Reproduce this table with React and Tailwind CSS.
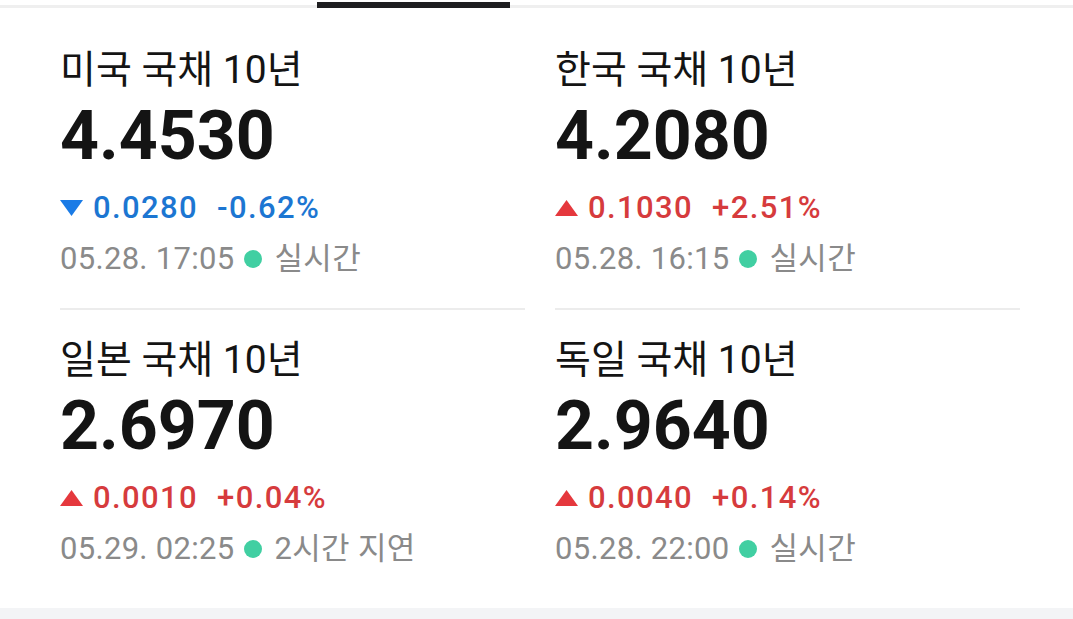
import React from "react";

const bonds = [
  { name: "미국 국채 10년", value: "4.4530", dir: "down", diff: "0.0280", rate: "-0.62%", time: "05.28. 17:05", status: "실시간" },
  { name: "한국 국채 10년", value: "4.2080", dir: "up", diff: "0.1030", rate: "+2.51%", time: "05.28. 16:15", status: "실시간" },
  { name: "일본 국채 10년", value: "2.6970", dir: "up", diff: "0.0010", rate: "+0.04%", time: "05.29. 02:25", status: "2시간 지연" },
  { name: "독일 국채 10년", value: "2.9640", dir: "up", diff: "0.0040", rate: "+0.14%", time: "05.28. 22:00", status: "실시간" },
];

const Arrow = ({ dir }) =>
  dir === "up" ? (
    <svg width="23" height="16" viewBox="0 0 23 16" className="mr-[10px] shrink-0">
      <polygon points="11.5,0 23,16 0,16" fill="#e5383d" />
    </svg>
  ) : (
    <svg width="23" height="16" viewBox="0 0 23 16" className="mr-[10px] shrink-0">
      <polygon points="0,0 23,0 11.5,16" fill="#1a7be6" />
    </svg>
  );

const BondCard = ({ bond, top }) => {
  const color = bond.dir === "up" ? "text-[#d63b3d]" : "text-[#1c76d2]";
  return (
    <div
      className={
        top
          ? "pt-[40px] pb-[29px] border-b-2 border-[#ececec]"
          : "pt-[28px]"
      }
    >
      <div className="text-[39px] leading-[44px] text-[#141414]">{bond.name}</div>
      <div className="mt-[6px] text-[68px] leading-[76px] font-bold text-[#141414]">
        {bond.value}
      </div>
      <div className={`mt-[14px] flex items-center text-[31px] leading-[40px] font-medium tracking-[1.4px] ${color}`}>
        <Arrow dir={bond.dir} />
        <span>{bond.diff}</span>
        <span className="ml-[19px]">{bond.rate}</span>
      </div>
      <div className="mt-[11px] flex items-center text-[31px] leading-[40px] tracking-[0.3px] text-[#8a8a8a]">
        <span>{bond.time}</span>
        <span className="ml-[9px] mr-[13px] w-[18px] h-[18px] rounded-full bg-[#41cfa2]" />
        <span>{bond.status}</span>
      </div>
    </div>
  );
};

export default function App() {
  return (
    <div
      className="w-[1073px] h-[619px] bg-white flex flex-col overflow-hidden"
      style={{ fontFamily: 'Roboto, "Noto Sans CJK KR", sans-serif' }}
    >
      <div className="relative h-[8px] shrink-0 border-b-[3px] border-[#efefef]">
        <div className="absolute left-[317px] top-[2px] w-[193px] h-[6px] bg-[#1e1e20]" />
      </div>
      <div className="grid grid-cols-2 gap-x-[30px] pl-[60px] pr-[53px]">
        {bonds.map((b, i) => (
          <BondCard key={b.name} bond={b} top={i < 2} />
        ))}
      </div>
      <div className="flex-1" />
      <div className="h-[11px] shrink-0 bg-[#f3f4f6]" />
    </div>
  );
}
